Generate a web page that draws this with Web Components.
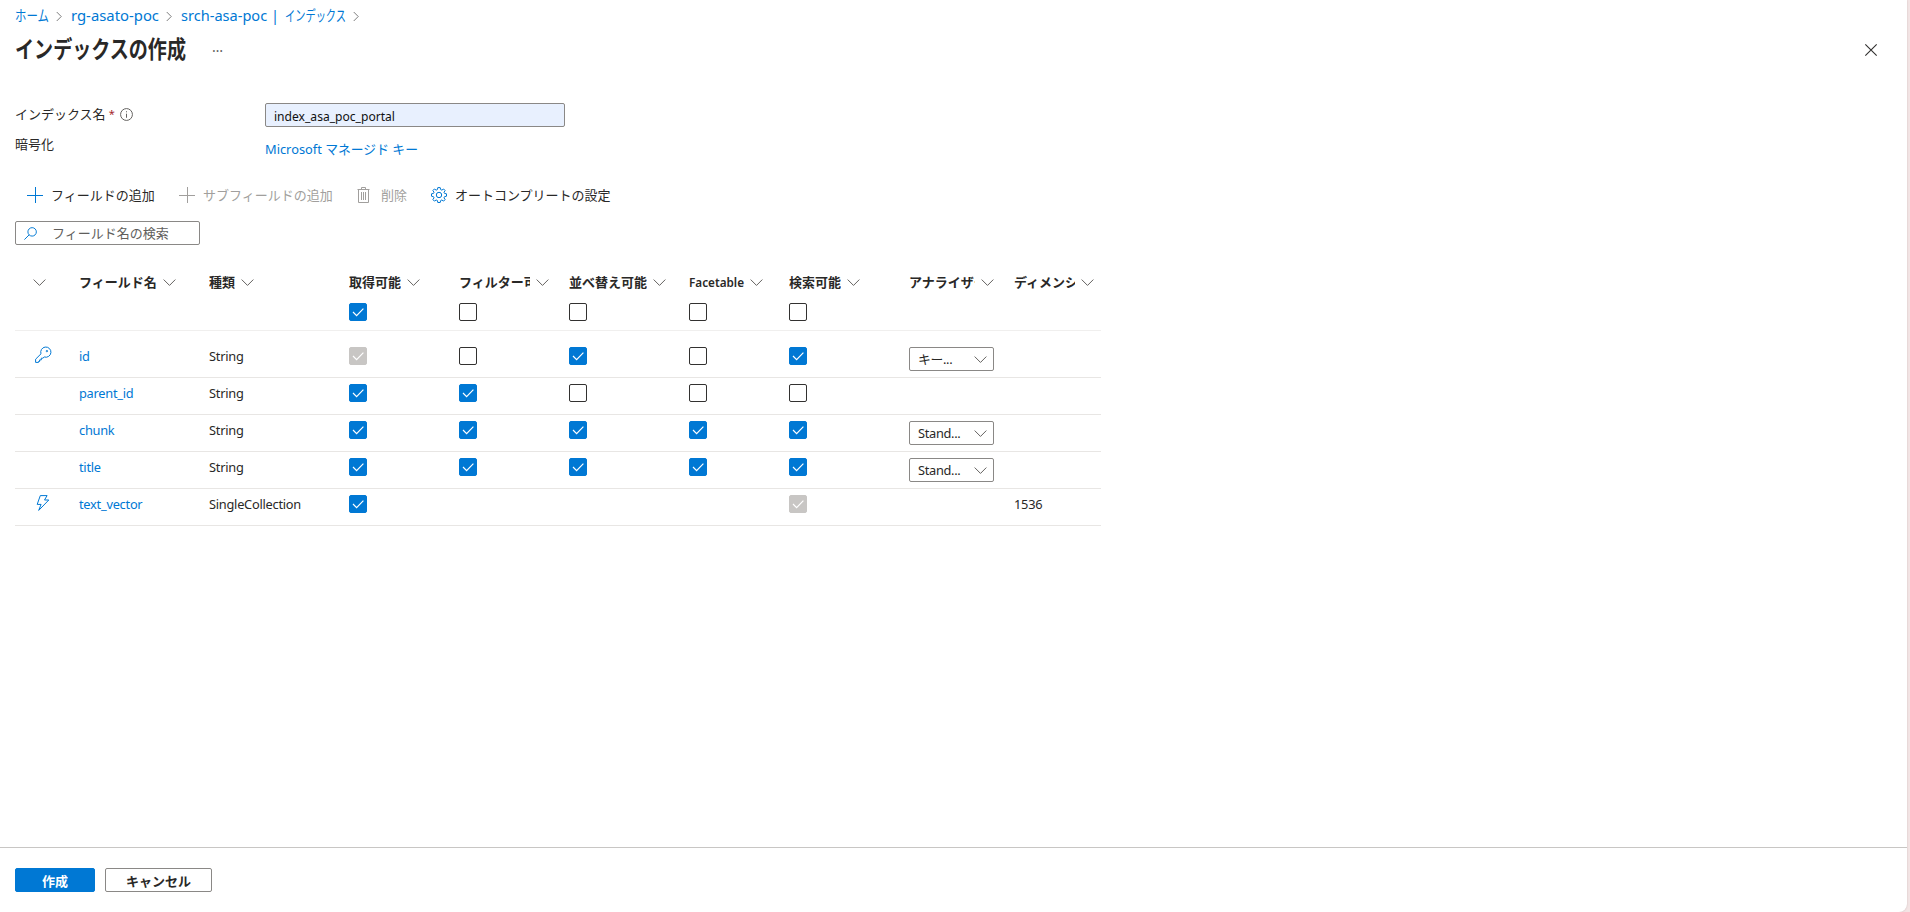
<!DOCTYPE html>
<html lang="ja">
<head>
<meta charset="utf-8">
<title>インデックスの作成</title>
<style>
	html, body { height: 100%; }
	body {
		margin: 0;
		overflow: hidden;
		background: #f3e4e4;
		font: 13px/20px "Noto Sans", "Noto Sans CJK JP", sans-serif;
		color: #292827;
	}
</style>
</head>
<body>
<index-blade></index-blade>
<script>
(function() {
	const ICONS = {
		chevron: '<path d="M.8 4.4L8 11.6l7.2-7.2"/>',
		right: '<path d="M4 1.5L10.5 8 4 14.5"/>',
		close: '<path d="M1.5 1.5l13 13M14.5 1.5l-13 13"/>',
		plus: '<path d="M8.5 0v16M0 8.5h16"/>',
		search: '<circle cx="10" cy="6" r="5.2"/><path d="M6.3 9.7L.5 15.5"/>',
		info: '<circle cx="8" cy="8" r="7.3"/><path d="M8 7v5M8 4v1.3"/>',
		trash: '<path d="M.5 2.5h12M4.5 2.5v-2h4v2M1.5 2.5v13h10v-13M4.5 5v8M6.5 5v8M8.5 5v8"/>',
		gear: '<circle cx="8" cy="8" r="2.7"/><path d="M6.8.6h2.4l.5 2 1.1.5 1.8-1.1 1.5 1.5-1.1 1.8.5 1.1 2 .4v2.4l-2 .5-.5 1.1 1.1 1.8-1.5 1.5-1.8-1.1-1.1.5-.5 2H6.8l-.4-2-1.2-.5-1.8 1.1L1.9 12.6 3 10.8l-.5-1.1-2-.5V6.8l2-.4L3 5.3 1.9 3.5 3.4 2l1.8 1.1 1.2-.5z"/>',
		key: '<path d="M.6 15.4v-3.2L6 6.8A5.1 5.1 0 1 1 9.3 10L7.8 11.2H6.3v1.7H4.6v1.6H3.5v.9z"/><circle cx="11.9" cy="4.1" r=".7"/>',
		bolt: '<path d="M5.3.6h6.8L9.5 5h4.3L3.7 15.4l2.4-6H2.2z"/>'
	};

	// registers an element whose shadow root is cloned from the given markup
	function define(name, html, setup) {
		const template = document.createElement("template");
		template.innerHTML = html;
		customElements.define(name, class extends HTMLElement {
			constructor() {
				super();
				this.attachShadow({mode: "open"}).appendChild(template.content.cloneNode(true));
			}
			connectedCallback() {
				if (setup && !this._ready) {
					this._ready = true;
					setup(this, this.shadowRoot);
				}
			}
		});
	}

	define("ui-icon", `
		<style>
			:host { display: inline-block; flex: none; width: 16px; height: 16px; }
			svg { display: block; width: 100%; height: 100%; overflow: visible; }
		</style>
		<svg viewBox="0 0 16 16" fill="none" stroke="currentColor"></svg>
	`, (el, root) => {
		const svg = root.querySelector("svg");
		svg.innerHTML = ICONS[el.getAttribute("name")];
		svg.setAttribute("stroke-width", el.getAttribute("weight") || "1");
	});

	// condenses its text to the width attribute
	define("fit-text", `
		<style>
			:host { display: inline-flex; white-space: nowrap; }
			span { flex: none; transform-origin: 0 50%; }
		</style>
		<span><slot></slot></span>
	`, (el, root) => {
		const span = root.querySelector("span");
		const width = Number(el.getAttribute("width"));
		span.style.transform = `scaleX(${width / (span.getBoundingClientRect().width || width)})`;
		el.style.width = width + "px";
	});

	define("crumb-link", `
		<style>
			:host { display: flex; align-items: center; color: #0078d4; font-size: 14.6px; white-space: nowrap; }
			ui-icon { width: 11px; height: 11px; margin: 2px 6px 0 5px; color: #777; }
		</style>
		<slot></slot><ui-icon name="right" weight="1.4"></ui-icon>
	`);

	define("check-box", `
		<style>
			:host { display: block; box-sizing: border-box; width: 18px; height: 18px; border: 1px solid #323130; border-radius: 2px; color: #fff; }
			:host([checked]) { background: #0078d4; border-color: #0078d4; }
			:host([disabled]) { background: #c8c6c4; border-color: #c8c6c4; }
			svg { display: none; }
			:host([checked]) svg { display: block; }
		</style>
		<svg width="16" height="16" fill="none" stroke="currentColor" stroke-width="1.2"><path d="M3 8l3.6 3.6L13.4 4.6"/></svg>
	`);

	define("select-box", `
		<style>
			:host { display: flex; align-items: center; justify-content: space-between; box-sizing: border-box; width: 85px; height: 24px; padding: 0 6px 0 8px; border: 1px solid #8a8886; border-radius: 2px; font-size: 12.8px; letter-spacing: -.3px; }
			ui-icon { width: 13px; height: 13px; margin-top: 1px; color: #605e5c; }
		</style>
		<span><slot></slot></span><ui-icon name="chevron" weight="1.2"></ui-icon>
	`);

	define("command-button", `
		<style>
			:host { display: flex; align-items: center; white-space: nowrap; color: #292827; }
			:host([disabled]) { color: #a19f9d; }
			ui-icon { margin-right: 8px; color: #0078d4; }
			:host([disabled]) ui-icon { color: #a19f9d; }
		</style>
		<ui-icon></ui-icon><span><slot></slot></span>
	`, (el, root) => {
		const icon = document.createElement("ui-icon");
		icon.setAttribute("name", el.getAttribute("icon"));
		root.querySelector("ui-icon").replaceWith(icon);
	});

	define("push-button", `
		<style>
			:host { display: flex; align-items: center; justify-content: center; box-sizing: border-box; height: 24px; padding-top: 2px; border: 1px solid #8a8886; border-radius: 2px; font-weight: 600; }
			:host([primary]) { color: #fff; background: #0078d4; border-color: #0078d4; }
		</style>
		<span><slot></slot></span>
	`);

	define("column-head", `
		<style>
			:host { display: flex; flex-direction: column; align-items: flex-start; min-width: 0; }
			div { display: flex; align-items: center; height: 20px; font-size: 13px; font-weight: 600; }
			span { overflow: hidden; white-space: nowrap; }
			ui-icon { width: 13px; height: 13px; color: #605e5c; }
			slot[name] { display: block; margin-top: 11px; }
		</style>
		<div><span><slot></slot></span><ui-icon name="chevron" weight="1.2"></ui-icon></div>
		<slot name="check"></slot>
	`, (el, root) => {
		// text width up to the chevron, longer names are clipped
		root.querySelector("span").style.width = el.getAttribute("text") + "px";
		root.querySelector("ui-icon").style.marginLeft = (el.getAttribute("gap") || 6) + "px";
	});

	define("field-row", `
		<style>
			:host { display: grid; grid-template-columns: 64px 130px 140px 110px 110px 120px 100px 120px 105px 87px; box-sizing: border-box; height: 37px; padding-top: 5px; border-bottom: 1px solid #e8e6e4; }
			:host([head]) { height: 61px; padding-top: 2px; border-color: #f0efee; }
			:host([first]) { height: 47px; padding-top: 15px; }
		</style>
		<slot></slot>
	`);

	const COLUMNS = [
		{text: "", width: 0, gap: 18},
		{text: "フィールド名", width: 78},
		{text: "種類", width: 26},
		{text: "取得可能", width: 52, check: "on"},
		{text: "フィルター可能", width: 71, check: "off"},
		{text: "並べ替え可能", width: 78, check: "off"},
		{text: "Facetable", fit: 55, width: 56, check: "off", gap: 5},
		{text: "検索可能", width: 52, check: "off"},
		{text: "アナライザー", width: 66},
		{text: "ディメンション", width: 61}
	];
	const FIELDS = [
		{icon: "key", name: "id", type: "String", checks: ["lock", "off", "on", "off", "on"], analyzer: "キー..."},
		{name: "parent_id", type: "String", checks: ["on", "on", "off", "off", "off"]},
		{name: "chunk", type: "String", checks: ["on", "on", "on", "on", "on"], analyzer: "Stand..."},
		{name: "title", type: "String", checks: ["on", "on", "on", "on", "on"], analyzer: "Stand..."},
		{icon: "bolt", name: "text_vector", type: "SingleCollection", checks: ["on", "", "", "", "lock"], dim: "1536"}
	];

	function checkBox(state, slot) {
		if (!state) {
			return "";
		}
		const attrs = {on: "checked", off: "", lock: "checked disabled"}[state];
		return `<check-box ${attrs} ${slot ? 'slot="check"' : ""}></check-box>`;
	}

	define("field-table", `
		<style>
			:host { display: block; width: 1086px; }
			.cell { font-size: 12.8px; letter-spacing: -.25px; line-height: 20px; white-space: nowrap; }
			.cell > ui-icon { margin: 1px 0 0 20px; color: #0078d4; }
			.name { color: #0078d4; }
			.pick { padding-top: 1px; }
			check-box { margin-top: 1px; }
			check-box[slot] { margin-top: 0; }
			fit-text { vertical-align: top; }
		</style>
		<div id="rows"></div>
	`, (el, root) => {
		const head = COLUMNS.map(c => {
			const text = c.fit ? `<fit-text width="${c.fit}">${c.text}</fit-text>` : c.text;
			return `<column-head text="${c.width}" gap="${c.gap || 6}">${text}${checkBox(c.check, true)}</column-head>`;
		}).join("");
		const rows = FIELDS.map((f, i) => `
			<field-row ${i ? "" : "first"}>
				<div class="cell">${f.icon ? `<ui-icon name="${f.icon}"></ui-icon>` : ""}</div>
				<div class="cell name">${f.name}</div>
				<div class="cell">${f.type}</div>
				${f.checks.map(s => `<div>${checkBox(s)}</div>`).join("")}
				<div class="pick">${f.analyzer ? `<select-box>${f.analyzer}</select-box>` : ""}</div>
				<div class="cell">${f.dim || ""}</div>
			</field-row>`).join("");
		root.getElementById("rows").innerHTML = `<field-row head>${head}</field-row>${rows}`;
	});

	define("index-blade", `
		<style>
			:host { display: flex; flex-direction: column; box-sizing: border-box; width: 1907px; height: 912px; background: #fff; border-bottom-right-radius: 8px; box-shadow: 0 0 2px #c9bcbc; }
			main { flex: 1; padding: 5px 15px 0; }
			nav { display: flex; height: 20px; }
			nav fit-text + fit-text { margin-left: 6px; }
			header { display: flex; align-items: center; height: 50px; }
			h1 { margin: 0 0 2px; width: 171px; font-size: 23.5px; line-height: 32px; font-weight: 600; white-space: nowrap; }
			h1 fit-text { vertical-align: top; }
			.more { flex: 1; margin: 0 0 6px 26px; font-size: 14px; letter-spacing: 1px; color: #605e5c; }
			.close { width: 14px; height: 14px; margin-right: 14px; color: #323130; }
			.form { display: grid; grid-template-columns: 250px 300px; grid-template-rows: 34px 30px; margin-top: 28px; }
			.label { display: flex; align-items: center; height: 22px; }
			.label + .input + .label { margin-top: -4px; }
			.label i { margin: 0 5px 0 3px; font-size: 11px; font-style: normal; color: #a4262c; }
			.label ui-icon { width: 13px; height: 13px; margin-top: 1px; color: #605e5c; }
			.input { box-sizing: border-box; height: 24px; padding: 2px 8px; border: 1px solid #8a8886; border-radius: 2px; background: #e8f0fe; color: #111; }
			.link { padding-top: 2px; color: #0078d4; }
			.commands { display: flex; height: 32px; margin: 12px 0 0 12px; }
			.search { display: flex; align-items: center; box-sizing: border-box; width: 185px; height: 24px; margin: 10px 0 25px; padding-left: 8px; border: 1px solid #8a8886; border-radius: 2px; color: #605e5c; }
			.search ui-icon { width: 13px; height: 13px; margin-right: 15px; color: #0078d4; }
			footer { display: flex; gap: 10px; box-sizing: border-box; height: 65px; padding: 20px 15px; border-top: 1px solid #c8c6c4; }
		</style>
		<main>
			<nav>
				<crumb-link><fit-text width="34">ホーム</fit-text></crumb-link>
				<crumb-link><fit-text width="88">rg-asato-poc</fit-text></crumb-link>
				<crumb-link><fit-text width="98">srch-asa-poc |</fit-text><fit-text width="61">インデックス</fit-text></crumb-link>
			</nav>
			<header>
				<h1><fit-text width="171">インデックスの作成</fit-text></h1>
				<span class="more">…</span>
				<ui-icon class="close" name="close" weight="1.3"></ui-icon>
			</header>
			<div class="form">
				<div class="label">インデックス名<i>*</i><ui-icon name="info" weight="1.2"></ui-icon></div>
				<div class="input"><fit-text width="121">index_asa_poc_portal</fit-text></div>
				<div class="label">暗号化</div>
				<div class="link"><fit-text width="153">Microsoft マネージド キー</fit-text></div>
			</div>
			<div class="commands">
				<command-button icon="plus" style="width:152px">フィールドの追加</command-button>
				<command-button icon="plus" style="width:178px" disabled>サブフィールドの追加</command-button>
				<command-button icon="trash" style="width:74px" disabled>削除</command-button>
				<command-button icon="gear">オートコンプリートの設定</command-button>
			</div>
			<div class="search"><ui-icon name="search" weight="1.2"></ui-icon>フィールド名の検索</div>
			<field-table></field-table>
		</main>
		<footer>
			<push-button primary style="width:80px">作成</push-button>
			<push-button style="width:107px">キャンセル</push-button>
		</footer>
	`);
})();
</script>
</body>
</html>
